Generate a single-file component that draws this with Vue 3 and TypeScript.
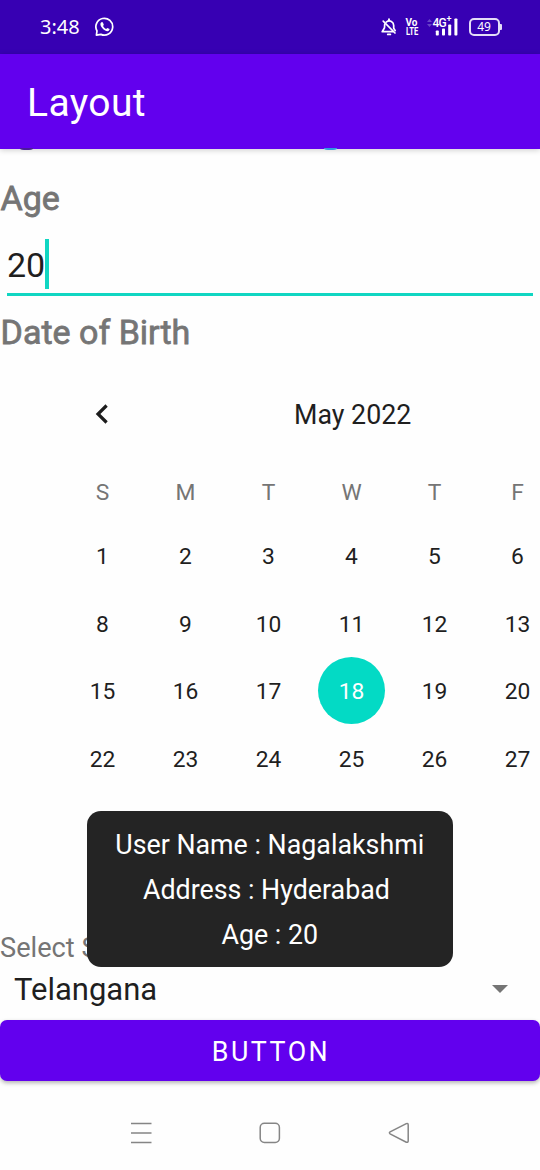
<script setup lang="ts">
interface Day {
  label: number
  selected: boolean
}

const weekdays: string[] = ['S', 'M', 'T', 'W', 'T', 'F']
const selectedDay = 18
const weeks: Day[][] = [1, 8, 15, 22].map((start) =>
  weekdays.map((_, i) => ({ label: start + i, selected: start + i === selectedDay })),
)
const toastLines: string[] = ['User Name : Nagalakshmi', 'Address : Hyderabad ', 'Age : 20']
</script>

<template>
  <div class="screen">
    <header class="status">
      <span class="time">3:48</span>
      <svg class="whatsapp" width="20" height="20" viewBox="0 0 20 20" fill="none">
        <path d="M1.4 18.2 L2 13.9 A8.4 8.4 0 1 1 5.9 17.4 Z" stroke="#fff" stroke-width="1.7" stroke-linejoin="round" />
        <path d="M6.2 5.2 C5 6.4 5.1 8.2 6.8 10.5 C8.7 13 10.9 14.2 12.5 14.2 C13.7 14.1 14.6 13.2 14.6 12.1 L12.4 10.9 L11.1 12 C9.8 11.4 8.7 10.3 8.1 9 L8.8 7.7 L7.8 5.3 Z" fill="#fff" />
      </svg>
      <div class="status-right">
        <svg class="bell" width="16" height="18" viewBox="0 0 16 18" fill="none" stroke="#fff" stroke-width="1.7" stroke-linecap="round" stroke-linejoin="round">
          <path d="M5.2 4.1 C9 1.4 12.7 4.1 12.7 7.5 V10.2 L14.2 12.6" />
          <path d="M3.7 6.2 L3.5 9.8 L1.2 13.7 H11.8" />
          <path d="M2.2 3.1 L14 15" />
          <path d="M8 1.3 V2.4 M6.8 16.4 H9.3" stroke-width="1.9" />
        </svg>
        <div class="volte"><span>Vo</span><span>LTE</span></div>
        <div class="network">
          <svg class="data" width="5" height="8" viewBox="0 0 5 8" fill="#6a45c8">
            <path d="M0 3 L2.5 0 L5 3 Z M0 5 H5 L2.5 8 Z" />
          </svg>
          <span class="gen">4G<sup>+</sup></span>
          <svg class="bars" width="23" height="19" viewBox="0 0 23 19" fill="#fff">
            <rect x="0.8" y="13.5" width="3" height="5" rx=".8" />
            <rect x="7" y="11.5" width="3" height="7" rx=".8" />
            <rect x="13.2" y="7.5" width="3" height="11" rx=".8" />
            <rect x="19.4" y="1.5" width="3" height="17" rx=".8" />
          </svg>
        </div>
        <div class="battery"><span>49</span></div>
      </div>
    </header>
    <div class="appbar">
      <h1>Layout</h1>
      <i class="peek dark"></i>
      <i class="peek teal"></i>
    </div>

    <main>
      <label class="label age">Age</label>
      <div class="field"><span>20</span><i class="caret"></i></div>
      <label class="label dob">Date of Birth</label>

      <section class="calendar">
        <div class="month">
          <svg width="14" height="20" viewBox="0 0 14 20" fill="none" stroke="#1c1c1c" stroke-width="3.2">
            <path d="M12.6 1.5 L4 10 L12.6 18.5" />
          </svg>
          <span>May 2022</span>
        </div>
        <div class="week head">
          <span v-for="(d, i) in weekdays" :key="i">{{ d }}</span>
        </div>
        <div v-for="(week, w) in weeks" :key="w" class="week">
          <span v-for="day in week" :key="day.label" :class="{ selected: day.selected }"><b>{{ day.label }}</b></span>
        </div>
      </section>

      <div class="select-label">Select State</div>
      <div class="spinner">
        <span>Telangana</span>
        <svg width="16" height="8" viewBox="0 0 16 8"><path d="M0 0 H16 L8 8 Z" fill="#757575" /></svg>
      </div>
      <button type="button">BUTTON</button>
    </main>

    <nav>
      <svg width="22" height="22" viewBox="0 0 22 22"><path d="M1 1.5 H21.5 M1 11 H21.5 M1 20.5 H21.5" /></svg>
      <svg width="22" height="22" viewBox="0 0 22 22"><rect x="1.2" y="1.2" width="19.2" height="19.2" rx="4.2" /></svg>
      <svg width="22" height="22" viewBox="0 0 22 22"><path d="M18.3 1.6 L2.1 9.9 Q0.7 10.8 2.1 11.8 L18.3 20.2 Q20.2 20.8 20.2 18.8 V3 Q20.2 1 18.3 1.6 Z" /></svg>
    </nav>

    <div class="toast">
      <div v-for="line in toastLines" :key="line">{{ line }}</div>
    </div>
  </div>
</template>

<style>
body {
  margin: 0;
  background: #fefefe;
}
</style>

<style scoped>
.screen {
  position: relative;
  display: flex;
  flex-direction: column;
  width: 540px;
  height: 1170px;
  overflow: hidden;
  background: #fefefe;
  color: #1f1f1f;
  font-family: Roboto, 'Liberation Sans', sans-serif;
}
.status {
  display: flex;
  align-items: center;
  box-sizing: border-box;
  height: 54px;
  padding: 0 38.5px 0 40px;
  background: #3700b3;
  color: #fff;
}
.time {
  width: 55px;
  font: 400 20px/54px 'Noto Sans', sans-serif;
}
.status-right {
  display: flex;
  align-items: center;
  margin-left: auto;
}
.volte {
  display: flex;
  flex-direction: column;
  width: 13px;
  margin-left: 9px;
  font-size: 10px;
  font-weight: 700;
  line-height: 9px;
}
.volte span {
  width: max-content;
  transform-origin: left;
}
.volte span:last-child {
  transform: scaleX(0.76);
}
.network {
  position: relative;
  width: 34px;
  height: 20px;
  margin-left: 7px;
}
.data {
  position: absolute;
  left: 1px;
  top: 2px;
}
.gen {
  position: absolute;
  left: 7px;
  top: 0;
  font-size: 12px;
  font-weight: 500;
  line-height: 12px;
  letter-spacing: -0.8px;
}
.gen sup {
  position: absolute;
  left: 14px;
  top: -2px;
  font-size: 9px;
  line-height: 9px;
}
.bars {
  position: absolute;
  left: 9.7px;
  top: 0;
}
.battery {
  position: relative;
  box-sizing: border-box;
  width: 31px;
  height: 18px;
  margin: 0 2px 0 9px;
  border: 2px solid #e4dcf7;
  border-radius: 5px;
  font: 400 12px/14px 'Noto Sans', sans-serif;
  text-align: center;
}
.battery::after {
  content: '';
  position: absolute;
  right: -4px;
  top: 4px;
  width: 2px;
  height: 6px;
  border-radius: 0 1px 1px 0;
  background: #e4dcf7;
}
.appbar {
  position: relative;
  height: 94.5px;
  background: #6200ee;
  color: #fff;
  box-shadow: 0 1px 6px rgba(0, 0, 0, 0.2);
}
h1 {
  margin: 0 0 0 27px;
  font-size: 39px;
  font-weight: 400;
  line-height: 98.5px;
  letter-spacing: 0.4px;
}
.peek {
  position: absolute;
  top: 93.5px;
  height: 2.5px;
  border-radius: 0 0 50% 50%;
}
.peek.dark {
  left: 20px;
  width: 13px;
  background: #4a1a9a;
}
.peek.teal {
  left: 324px;
  width: 13px;
  background: #2e9be0;
}
main {
  display: flex;
  flex-direction: column;
}
.label {
  height: 40px;
  padding-left: 0.6px;
  color: #757575;
  font-size: 34px;
  line-height: 40px;
  -webkit-text-stroke: 0.8px #757575;
}
.age {
  margin-top: 29px;
}
.field {
  display: flex;
  align-items: center;
  box-sizing: border-box;
  height: 58px;
  margin: 20.5px 7px 0;
  padding-bottom: 1.5px;
  border-bottom: 3.5px solid #10d6c2;
  font-size: 34px;
}
.caret {
  width: 3.5px;
  height: 50px;
  margin-bottom: 1.5px;
  background: #10d6c2;
}
.dob {
  margin-top: 15.5px;
}
.calendar {
  height: 440px;
  margin-top: 22px;
  padding-left: 61px;
  overflow: hidden;
}
.month {
  display: flex;
  align-items: center;
  box-sizing: border-box;
  height: 84px;
  padding: 0 0 3px 33px;
  font-size: 26.8px;
}
.month span {
  margin-left: 186px;
  padding-top: 1px;
}
.week {
  display: grid;
  grid-template-columns: repeat(6, 83px);
  height: 67.5px;
  font-size: 22.8px;
  line-height: 68px;
  text-align: center;
}
.week:nth-child(even) {
  line-height: 69.5px;
}
.week.head {
  height: 65px;
  color: #757575;
  line-height: 70px;
}
.week:nth-child(3),
.week:nth-child(5) {
  line-height: 68px;
}
.week b {
  display: block;
  font-weight: 400;
}
.week .selected b {
  width: 67px;
  height: 67px;
  margin: -0.6px auto 0;
  border-radius: 50%;
  background: #03dac5;
  color: #fff;
  line-height: 69px;
}
.select-label {
  height: 36px;
  margin-top: 116px;
  color: #757575;
  font-size: 27.2px;
  line-height: 36px;
  white-space: nowrap;
}
.spinner {
  display: flex;
  align-items: center;
  justify-content: space-between;
  height: 46px;
  padding: 0 32px 0 14px;
  font-size: 31px;
}
.spinner span {
  padding-top: 1.5px;
}
button {
  height: 61px;
  margin-top: 8.5px;
  padding: 3px 0 0 2px;
  border: 0;
  border-radius: 7px;
  background: #6200ee;
  box-shadow: 0 2px 4px rgba(0, 0, 0, 0.3);
  color: #fff;
  font: 400 26.8px Roboto, sans-serif;
  letter-spacing: 2.5px;
}
nav {
  display: flex;
  gap: 107px;
  margin-top: 41px;
  padding-left: 130px;
}
nav svg {
  fill: none;
  stroke: #858585;
  stroke-width: 1.5;
}
.toast {
  position: absolute;
  left: 87px;
  top: 811px;
  box-sizing: border-box;
  width: 365.5px;
  height: 156px;
  padding-top: 12px;
  border-radius: 14px;
  background: #242424;
  color: #fff;
  font-size: 26.8px;
  line-height: 45px;
  text-align: center;
  white-space: pre;
}
</style>
